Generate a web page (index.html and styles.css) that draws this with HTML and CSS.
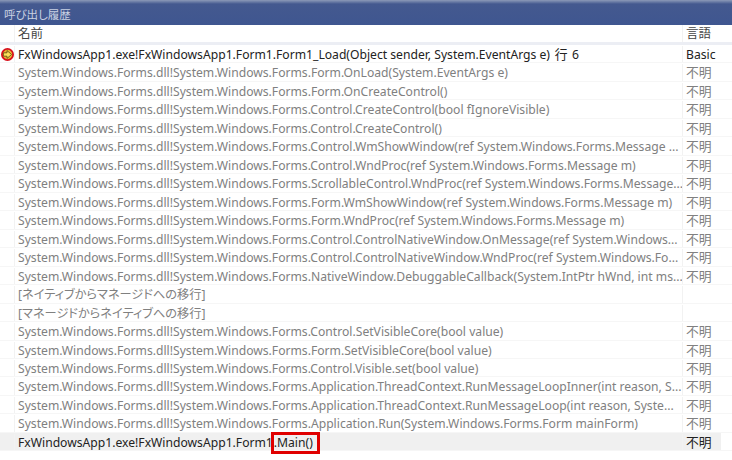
FILE: index.html
```html
<!DOCTYPE html>
<html lang="ja">
<head>
<meta charset="utf-8">
<title>呼び出し履歴</title>
<link rel="stylesheet" href="styles.css">
</head>
<body>
<div class="panel">
  <div class="title">呼び出し履歴</div>
  <div class="row head"><div class="gutter"></div><div class="name">名前</div><div class="lang">言語</div></div>
  <div class="rows">
    <div class="row cur"><div class="gutter"><svg class="arrow" width="13" height="13" viewBox="0 0 13 13"><circle cx="6.5" cy="6.5" r="5.6" fill="#e8b832" stroke="#d8101c" stroke-width="1.8"/><path d="M2.4 4.8h3.6V2.6l4.6 3.9L6 10.4V8.200H2.400z" fill="#fbe35a" stroke="#5c4210" stroke-width=".8"/></svg></div><div class="name">FxWindowsApp1.exe!FxWindowsApp1.Form1.Form1_Load(Object sender, System.EventArgs e) <span class="cjk line">行</span> 6</div><div class="lang">Basic</div></div>
    <div class="row"><div class="gutter"></div><div class="name">System.Windows.Forms.dll!System.Windows.Forms.Form.OnLoad(System.EventArgs e)</div><div class="lang cjk">不明</div></div>
    <div class="row"><div class="gutter"></div><div class="name">System.Windows.Forms.dll!System.Windows.Forms.Form.OnCreateControl()</div><div class="lang cjk">不明</div></div>
    <div class="row"><div class="gutter"></div><div class="name">System.Windows.Forms.dll!System.Windows.Forms.Control.CreateControl(bool fIgnoreVisible)</div><div class="lang cjk">不明</div></div>
    <div class="row"><div class="gutter"></div><div class="name">System.Windows.Forms.dll!System.Windows.Forms.Control.CreateControl()</div><div class="lang cjk">不明</div></div>
    <div class="row"><div class="gutter"></div><div class="name">System.Windows.Forms.dll!System.Windows.Forms.Control.WmShowWindow(ref System.Windows.Forms.Message ...</div><div class="lang cjk">不明</div></div>
    <div class="row"><div class="gutter"></div><div class="name">System.Windows.Forms.dll!System.Windows.Forms.Control.WndProc(ref System.Windows.Forms.Message m)</div><div class="lang cjk">不明</div></div>
    <div class="row"><div class="gutter"></div><div class="name">System.Windows.Forms.dll!System.Windows.Forms.ScrollableControl.WndProc(ref System.Windows.Forms.Message...</div><div class="lang cjk">不明</div></div>
    <div class="row"><div class="gutter"></div><div class="name">System.Windows.Forms.dll!System.Windows.Forms.Form.WmShowWindow(ref System.Windows.Forms.Message m)</div><div class="lang cjk">不明</div></div>
    <div class="row"><div class="gutter"></div><div class="name">System.Windows.Forms.dll!System.Windows.Forms.Form.WndProc(ref System.Windows.Forms.Message m)</div><div class="lang cjk">不明</div></div>
    <div class="row"><div class="gutter"></div><div class="name">System.Windows.Forms.dll!System.Windows.Forms.Control.ControlNativeWindow.OnMessage(ref System.Windows...</div><div class="lang cjk">不明</div></div>
    <div class="row"><div class="gutter"></div><div class="name">System.Windows.Forms.dll!System.Windows.Forms.Control.ControlNativeWindow.WndProc(ref System.Windows.Fo...</div><div class="lang cjk">不明</div></div>
    <div class="row"><div class="gutter"></div><div class="name">System.Windows.Forms.dll!System.Windows.Forms.NativeWindow.DebuggableCallback(System.IntPtr hWnd, int ms...</div><div class="lang cjk">不明</div></div>
    <div class="row"><div class="gutter"></div><div class="name cjk">[ネイティブからマネージドへの移行]</div><div class="lang"></div></div>
    <div class="row"><div class="gutter"></div><div class="name cjk">[マネージドからネイティブへの移行]</div><div class="lang"></div></div>
    <div class="row"><div class="gutter"></div><div class="name">System.Windows.Forms.dll!System.Windows.Forms.Control.SetVisibleCore(bool value)</div><div class="lang cjk">不明</div></div>
    <div class="row"><div class="gutter"></div><div class="name">System.Windows.Forms.dll!System.Windows.Forms.Form.SetVisibleCore(bool value)</div><div class="lang cjk">不明</div></div>
    <div class="row"><div class="gutter"></div><div class="name">System.Windows.Forms.dll!System.Windows.Forms.Control.Visible.set(bool value)</div><div class="lang cjk">不明</div></div>
    <div class="row"><div class="gutter"></div><div class="name">System.Windows.Forms.dll!System.Windows.Forms.Application.ThreadContext.RunMessageLoopInner(int reason, S...</div><div class="lang cjk">不明</div></div>
    <div class="row"><div class="gutter"></div><div class="name">System.Windows.Forms.dll!System.Windows.Forms.Application.ThreadContext.RunMessageLoop(int reason, Syste...</div><div class="lang cjk">不明</div></div>
    <div class="row"><div class="gutter"></div><div class="name">System.Windows.Forms.dll!System.Windows.Forms.Application.Run(System.Windows.Forms.Form mainForm)</div><div class="lang cjk">不明</div></div>
    <div class="row main"><div class="gutter"></div><div class="name">FxWindowsApp1.exe!FxWindowsApp1.Form1<span class="mark">.Main()</span></div><div class="lang cjk">不明</div></div>
  </div>
</div>
</body>
</html>
```
FILE: styles.css
```css
* { box-sizing: border-box; }
html, body { margin: 0; padding: 0; }
body {
  width: 732px;
  height: 460px;
  overflow: hidden;
  background: #fff;
  font-family: "Noto Sans", "Noto Sans CJK JP", sans-serif;
  font-size: 12.15px;
  color: #808080;
}
.title {
  height: 25px;
  padding: 5px 0 0 4px;
  background: linear-gradient(#8c9ab8 0, #44598f 4px, #3f5690 100%);
  color: #c9d1e2;
  font-size: 11.5px;
  line-height: 20px;
  font-feature-settings: "palt";
}
.row {
  display: flex;
  height: 18.476px;
  padding-top: 1px;
  line-height: 17px;
  border-bottom: 1px solid #f6f6f6;
}
.head {
  height: 20px;
  padding-top: 0;
  line-height: 18px;
  color: #444;
  border-bottom: 3px solid #eceef4;
}
.head .name,
.head .lang { font-size: 12.5px; overflow: visible; }
.gutter {
  flex: none;
  width: 15px;
  display: flex;
  align-items: center;
  border-right: 1px solid #f2f2f2;
}
.name {
  flex: none;
  width: 668px;
  padding-left: 3px;
  white-space: nowrap;
  overflow: hidden;
  border-right: 1px solid #f2f2f2;
}
.lang { flex: 1; padding-left: 3px; }
.cjk {
  font-size: 12.8px;
  font-feature-settings: "palt";
}
.name.cjk { font-size: 12.2px; }
.line { margin: 0 1.5px; }
.cur { color: #222; }
.arrow { flex: none; margin-left: 1px; }
.main { color: #222; background: linear-gradient(to right, #f0f0f0 721px, #fff 721px); }
.main .name { overflow: visible; }
.mark {
  display: inline-block;
  height: 16px;
  line-height: 16px;
  vertical-align: top;
  margin: 1px 0 0 1px;
  padding-right: 4px;
  outline: 3px solid #e00000;
}
```
